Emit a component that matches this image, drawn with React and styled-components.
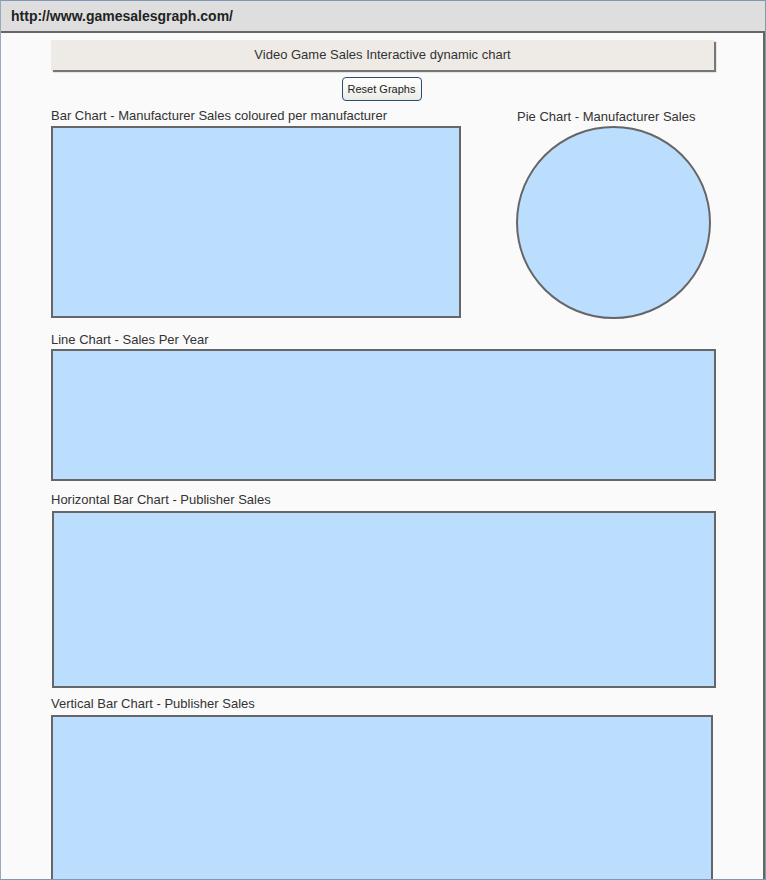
import React from 'react'
import styled, { createGlobalStyle } from 'styled-components'

const GlobalStyle = createGlobalStyle`
  html, body {
    margin: 0;
    padding: 0;
    background: #ffffff;
  }
  body {
    font-family: "Liberation Sans", Arial, sans-serif;
  }
`

const charts = [
  { label: 'Line Chart - Sales Per Year', height: 132, width: 665, top: 11, gap: 1, left: 0 },
  { label: 'Horizontal Bar Chart - Publisher Sales', height: 177, width: 664, top: 9, gap: 3, left: 1 },
  { label: 'Vertical Bar Chart - Publisher Sales', height: 190, width: 662, top: 6, gap: 3, left: 0 }
]

export default function App() {
  return (
    <Window>
      <GlobalStyle />
      <UrlBar>http://www.gamesalesgraph.com/</UrlBar>
      <Content>
        <Column>
          <TitleBar>Video Game Sales Interactive dynamic chart</TitleBar>
          <ButtonRow>
            <ResetButton>Reset Graphs</ResetButton>
          </ButtonRow>
          <TopRow>
            <Section gap={2}>
              <Label>Bar Chart - Manufacturer Sales coloured per manufacturer</Label>
              <ChartBox width={410} height={192} />
            </Section>
            <PieSection gap={1} top={1}>
              <Label indent={1}>Pie Chart - Manufacturer Sales</Label>
              <PieCircle />
            </PieSection>
          </TopRow>
          {charts.map(c => (
            <Section key={c.label} top={c.top} gap={c.gap}>
              <Label>{c.label}</Label>
              <ChartBox width={c.width} height={c.height} left={c.left} />
            </Section>
          ))}
        </Column>
      </Content>
    </Window>
  )
}

const Window = styled.div`
  width: 766px;
  height: 880px;
  box-sizing: border-box;
  border: 1px solid #7f97b2;
  border-left-color: #9aa8b8;
  display: flex;
  flex-direction: column;
  overflow: hidden;
  background: #fafafa;
`,
UrlBar = styled.div`
  height: 30px;
  flex: none;
  background: #dedede;
  border-bottom: 2px solid #666666;
  padding-left: 10px;
  font-size: 14px;
  font-weight: bold;
  color: #222222;
  line-height: 30px;
`,
Content = styled.div`
  flex: 1;
  min-height: 0;
  overflow: hidden;
  border-right: 2px solid #666666;
  padding: 7px 0 0 50px;
`,
Column = styled.div`
  width: 665px;
  display: flex;
  flex-direction: column;
`,
TitleBar = styled.div`
  width: 663px;
  height: 30px;
  box-sizing: border-box;
  background: #eeebe6;
  box-shadow: 2px 2px 1px #777777;
  font-size: 13px;
  color: #333333;
  line-height: 30px;
  text-align: center;
`,
ButtonRow = styled.div`
  display: flex;
  justify-content: center;
  margin-top: 7px;
  padding-right: 4px;
`,
ResetButton = styled.button`
  width: 80px;
  height: 24px;
  box-sizing: border-box;
  border: 1px solid #2c4d72;
  border-radius: 4px;
  background: linear-gradient(#ffffff, #ebebe6);
  font-family: "Liberation Sans", Arial, sans-serif;
  font-size: 11px;
  color: #222222;
  padding: 0;
  cursor: pointer;
`,
TopRow = styled.div`
  display: flex;
  align-items: flex-start;
  margin-top: 5px;
`,
Section = styled.div`
  display: flex;
  flex-direction: column;
  gap: ${props => props.gap || 0}px;
  margin-top: ${props => props.top || 0}px;
`,
PieSection = styled(Section)`
  margin-left: 55px;
  width: 195px;
`,
Label = styled.div`
  font-size: 13px;
  line-height: 16px;
  padding-top: 2px;
  padding-left: ${props => props.indent || 0}px;
  color: #333333;
  white-space: nowrap;
`,
ChartBox = styled.div`
  width: ${props => props.width}px;
  height: ${props => props.height}px;
  margin-left: ${props => props.left || 0}px;
  box-sizing: border-box;
  background: #bbdefe;
  border: 2px solid #666666;
  flex: none;
`,
PieCircle = styled.div`
  width: 195px;
  height: 193px;
  box-sizing: border-box;
  border-radius: 50%;
  background: #bbdefe;
  border: 2px solid #666666;
`
